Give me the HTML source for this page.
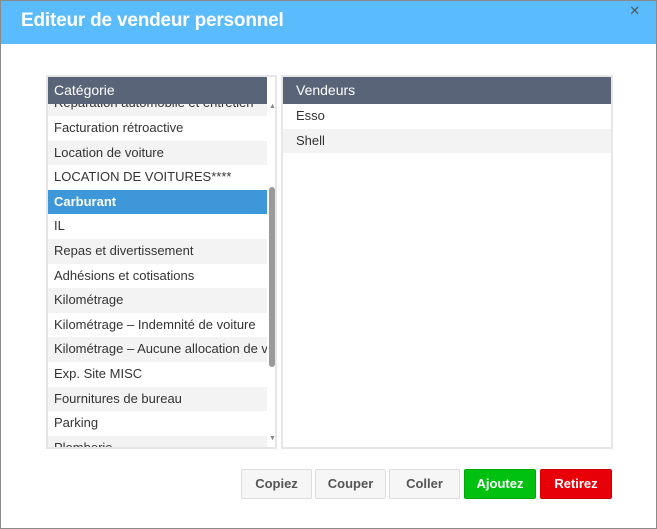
<!DOCTYPE html>
<html><head><meta charset="utf-8"><style>
*{box-sizing:border-box;margin:0;padding:0}
body{width:657px;height:529px;background:#fff;font-family:"Liberation Sans",sans-serif;position:relative;overflow:hidden}
.frame{position:absolute;left:0;top:0;width:657px;height:529px;border:1px solid #8a8a8a;z-index:5;pointer-events:none}
.hdr{position:absolute;left:0;top:0;width:657px;height:44px;background:#5bbcfd;color:#fff;font-weight:bold;font-size:19px;padding:10px 0 0 21px;letter-spacing:-0.2px}
.x{position:absolute;right:17px;top:3px;color:#555;font-size:13px;font-weight:normal}
.panel{position:absolute;top:75px;height:374px;border:2px solid #e6e6e6;overflow:hidden;background:#fff}
.ph{position:absolute;left:0;top:0;height:27px;background:#5a6478;color:#fff;font-size:14px;padding:5px 0 0 6px;z-index:2}
.row{position:absolute;left:0;height:24.6px;font-size:13px;color:#333;padding:4px 0 0 6px;white-space:nowrap;overflow:hidden}
.g{background:#f3f3f3}
.sel{background:#3d97d8;color:#fff;font-weight:bold}
.btn{position:absolute;top:469px;height:30px;border:1px solid #ddd;border-radius:2px;background:#f6f6f6;color:#555;font-weight:bold;font-size:13px;text-align:center;line-height:28px}
</style></head><body>
<div class="frame"></div>
<div class="hdr">Editeur de vendeur personnel<span class="x">✕</span></div>
<div class="panel" style="left:46px;width:231px">
<div class="ph" style="width:219px">Catégorie</div>
<div class="row g" style="top:14px;width:219px">Réparation automobile et entretien</div>
<div class="row" style="top:39px;width:219px">Facturation rétroactive</div>
<div class="row g" style="top:63.6px;width:219px">Location de voiture</div>
<div class="row" style="top:88.2px;width:219px">LOCATION DE VOITURES****</div>
<div class="row sel" style="top:112.8px;width:219px">Carburant</div>
<div class="row" style="top:137.4px;width:219px">IL</div>
<div class="row g" style="top:162px;width:219px">Repas et divertissement</div>
<div class="row" style="top:186.6px;width:219px">Adhésions et cotisations</div>
<div class="row g" style="top:211.2px;width:219px">Kilométrage</div>
<div class="row" style="top:235.8px;width:219px">Kilométrage – Indemnité de voiture</div>
<div class="row g" style="top:260.4px;width:219px">Kilométrage – Aucune allocation de voiture</div>
<div class="row" style="top:285px;width:219px">Exp. Site MISC</div>
<div class="row g" style="top:309.6px;width:219px">Fournitures de bureau</div>
<div class="row" style="top:334.2px;width:219px">Parking</div>
<div class="row g" style="top:358.8px;width:219px">Plomberie</div>
<div style="position:absolute;left:219px;top:0;width:10px;height:372px;background:#fff"></div>
<div style="position:absolute;left:221px;top:110px;width:6px;height:180px;background:#9a9a9a;border-radius:3px"></div>
<div style="position:absolute;left:221px;top:26px;font-size:7px;color:#888">▲</div>
<div style="position:absolute;left:221px;top:358px;font-size:7px;color:#888">▼</div>
</div>
<div class="panel" style="left:281px;width:332px">
<div class="ph" style="width:330px;padding-left:13px">Vendeurs</div>
<div class="row" style="top:27px;width:330px;padding-left:13px">Esso</div>
<div class="row g" style="top:51.6px;width:330px;padding-left:13px">Shell</div>
</div>
<div class="btn" style="left:241px;width:71px">Copiez</div>
<div class="btn" style="left:315px;width:71px">Couper</div>
<div class="btn" style="left:389px;width:71px">Coller</div>
<div class="btn" style="left:464px;width:72px;background:#00c010;border-color:#0a0;color:#fff">Ajoutez</div>
<div class="btn" style="left:540px;width:72px;background:#e80008;border-color:#c00;color:#fff">Retirez</div>
</body></html>
